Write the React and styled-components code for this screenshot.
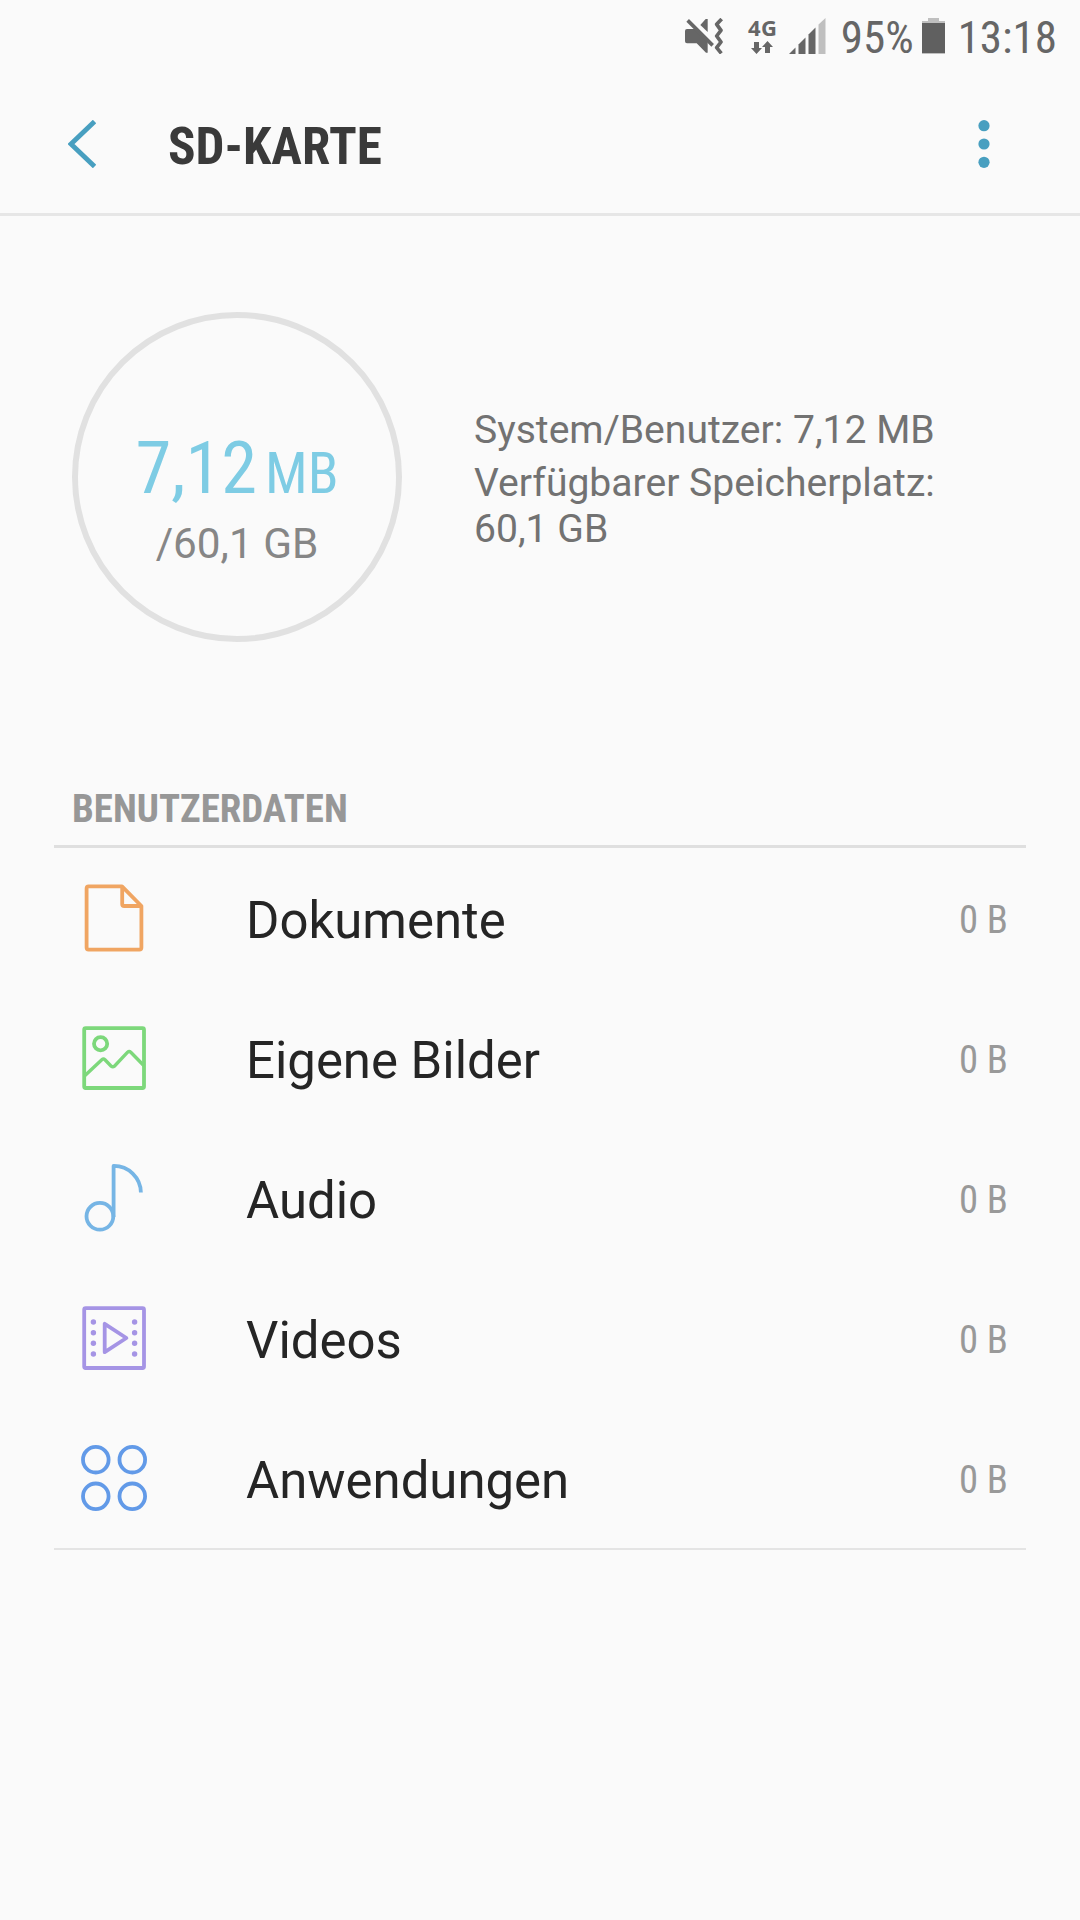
import React from "react";
import styled, { createGlobalStyle } from "styled-components";

const GlobalStyle = createGlobalStyle`
  * {
    box-sizing: border-box;
  }
  body {
    margin: 0;
    background-color: #fafafa;
    font-family: Roboto, "Liberation Sans", sans-serif;
  }
`;

const Condensed = styled.span`
  font-family: "Roboto Condensed", Roboto, sans-serif;
  font-stretch: 75%;
  white-space: nowrap;
`;

const Screen = styled.div`
  width: 1080px;
  height: 1920px;
  background-color: #fafafa;
  overflow: hidden;
`;

const StatusBar = styled.div`
  height: 72px;
  padding: 0 23px 0 0;
  display: flex;
  justify-content: flex-end;
  align-items: center;
  color: #666666;
`;

const StatusText = styled(Condensed)`
  font-size: 45px;
  line-height: 72px;
  padding-top: 3px;
  margin-left: ${props => props.$gap}px;
`;

const StatusIcon = styled.svg`
  flex: none;
  margin-left: ${props => props.$gap}px;
`;

const Network = styled.div`
  display: flex;
  flex-direction: column;
  align-items: center;
  width: 30px;
  height: 36px;
  margin: 0 -1px 0 24px;
  font-family: "Open Sans", sans-serif;
  font-size: 22px;
  font-weight: 700;
  line-height: 19px;
  letter-spacing: 0.5px;
`;

const Arrows = styled.svg`
  flex: none;
  margin: 4px 2px 0 0;
`;

const Header = styled.header`
  height: 144px;
  padding: 3px 90px 0 68px;
  display: flex;
  align-items: center;
  border-bottom: 3px solid #e6e6e6;
`;

const Title = styled(Condensed)`
  flex: 1;
  margin-left: 72px;
  padding-top: 6px;
  font-size: 51.2px;
  line-height: 60px;
  font-weight: 700;
  color: #3a3a3a;
`;

const Summary = styled.section`
  height: 569px;
  padding: 96px 72px 0;
  display: flex;
  gap: 72px;
`;

const Gauge = styled.div`
  width: 330px;
  height: 330px;
  padding-top: 112px;
  border: 6px solid #e1e1e1;
  border-radius: 50%;
  text-align: center;
`;

const Used = styled.div`
  height: 78px;
  line-height: 78px;
  font-size: 72.5px;
  color: #7ecce4;
`;

const Unit = styled(Condensed)`
  font-size: 56.5px;
  margin-left: 8px;
`;

const Total = styled.div`
  padding-top: 6px;
  font-size: 42.3px;
  line-height: 60px;
  color: #868686;
`;

const Details = styled.div`
  width: 480px;
  padding-top: 95px;
  font-size: 39.1px;
  line-height: 46px;
  color: #727272;
`;

const Detail = styled.p`
  margin: 0 0 7px;
`;

const SectionTitle = styled.h2`
  height: 63px;
  margin: 0 54px;
  padding: 1px 18px 0;
  border-bottom: 3px solid #dfdfdf;
  font-size: 38.9px;
  line-height: 46px;
  color: #979797;
`;

const List = styled.ul`
  list-style: none;
  margin: 0 54px;
  padding: 0;
  border-bottom: 2px solid #e4e4e4;
`;

const Row = styled.li`
  height: 140px;
  padding: 0 18px 0 24px;
  display: flex;
  align-items: center;
`;

const RowIcon = styled.svg`
  width: 72px;
  height: 72px;
  flex: none;
  fill: none;
  stroke: ${props => props.color};
  stroke-width: 3.8;
`;

const Label = styled.span`
  flex: 1;
  margin-left: 96px;
  padding-top: 4px;
  font-size: 50.9px;
  color: #252525;
`;

const Size = styled(Condensed)`
  padding-top: 2px;
  font-size: 38.7px;
  color: #999999;
`;

const DocumentIcon = () => (
  <RowIcon viewBox="0 0 72 72" color="#f0a562">
    <path
      d="M10.6 4.4H44L63.4 24V65.6a2 2 0 0 1-2 2H10.6a2 2 0 0 1-2-2V6.4a2 2 0 0 1 2-2Z"
      strokeLinejoin="round"
    />
    <path d="M44.2 5V22a2 2 0 0 0 2 2H63" />
  </RowIcon>
);

const PictureIcon = () => (
  <RowIcon viewBox="0 0 72 72" color="#7dd87b">
    <rect x="6.2" y="6.2" width="59.8" height="59.8" rx="1.5" />
    <circle cx="22.6" cy="21.8" r="6.6" />
    <path
      d="M7 53.5L23.8 37.8Q25.4 36.4 27 37.8L33.2 44.2Q34.8 45.5 36.4 44.2L49.6 30.2Q51.2 28.8 52.8 30.2L66 43.8"
      strokeWidth="3.4"
    />
  </RowIcon>
);

const AudioIcon = () => (
  <RowIcon viewBox="0 0 72 72" color="#76b5e5">
    <circle cx="21.9" cy="54.3" r="13.4" />
    <path d="M35.6 55V3.9A27 27 0 0 1 62.9 30.5" strokeLinejoin="round" />
  </RowIcon>
);

const VideoIcon = () => (
  <RowIcon viewBox="0 0 72 72" color="#a594e5">
    <rect x="6.2" y="6.2" width="59.8" height="59.8" rx="1.5" />
    <path d="M26.7 21.8V50.2L48.4 36Z" strokeLinejoin="round" />
    {[20, 30.7, 41.3, 52].map(y => (
      <g key={y} fill="#a594e5" stroke="none">
        <circle cx="15.4" cy={y} r="2.7" />
        <circle cx="56.6" cy={y} r="2.7" />
      </g>
    ))}
  </RowIcon>
);

const AppsIcon = () => (
  <RowIcon viewBox="0 0 72 72" color="#629ae8">
    <circle cx="17.8" cy="17.7" r="12.8" />
    <circle cx="54.3" cy="17.7" r="12.8" />
    <circle cx="17.8" cy="54.3" r="12.8" />
    <circle cx="54.3" cy="54.3" r="12.8" />
  </RowIcon>
);

const rows = [
  { label: "Dokumente", size: "0 B", Icon: DocumentIcon },
  { label: "Eigene Bilder", size: "0 B", Icon: PictureIcon },
  { label: "Audio", size: "0 B", Icon: AudioIcon },
  { label: "Videos", size: "0 B", Icon: VideoIcon },
  { label: "Anwendungen", size: "0 B", Icon: AppsIcon }
];

export default () => (
  <>
    <GlobalStyle />
    <Screen>
      <StatusBar>
        <StatusIcon $gap={0} width="40" height="36" viewBox="42 54 120 108" fill="#666">
          <path d="M51 87H76L113 124V158H108L80 130H51Q45 130 45 124V93Q45 87 51 87Z" />
          <path d="M91 75L107 57H113V96Z" />
          <path d="M53 61L128 136" stroke="#666" strokeWidth="11" />
          <path
            d="M155 57L140 73L153 91L140 108L153 126L140 143L154 160"
            fill="none"
            stroke="#666"
            strokeWidth="11"
            strokeLinejoin="round"
          />
        </StatusIcon>
        <Network>
          4G
          <Arrows width="22" height="14" viewBox="0 0 22 14" fill="#666">
            <path d="M3 1H8V7H11L5.5 13L0 7H3Z" />
            <path d="M14 12H19V6H22L16.5 0L11 6H14Z" />
          </Arrows>
        </Network>
        <StatusIcon $gap={12} width="37" height="36" viewBox="0 0 37 36" fill="#666">
          <path d="M0 36L6.5 29.5V36Z" />
          <path d="M9.5 26.5L16.5 19.5V36H9.5Z" />
          <path d="M19.5 16.5L26.5 9.5V36H19.5Z" />
          <path d="M29.5 6.5L36.5 0V36H29.5Z" fill="#bfbfbf" />
        </StatusIcon>
        <StatusText $gap={15}>95%</StatusText>
        <StatusIcon $gap={8} width="23" height="36" viewBox="0 0 23 36">
          <path d="M6 0H17V3H23V36H0V3H6Z" fill="#bfbfbf" />
          <path d="M0 5H23V35H0Z" fill="#606060" />
        </StatusIcon>
        <StatusText $gap={13}>13:18</StatusText>
      </StatusBar>
      <Header>
        <svg width="28" height="48" viewBox="0 0 28 48" fill="none">
          <path d="M26.5 1.5L3 24L26.5 46.5" stroke="#489fc0" strokeWidth="4.8" />
        </svg>
        <Title>SD-KARTE</Title>
        <svg width="12" height="50" viewBox="0 0 12 50" fill="#489fc0">
          <circle cx="6" cy="6.7" r="5.6" />
          <circle cx="6" cy="25" r="5.6" />
          <circle cx="6" cy="43.3" r="5.6" />
        </svg>
      </Header>
      <Summary>
        <Gauge>
          <Used>
            <Condensed>7,12</Condensed>
            <Unit>MB</Unit>
          </Used>
          <Total>/60,1 GB</Total>
        </Gauge>
        <Details>
          <Detail>System/Benutzer: 7,12 MB</Detail>
          <Detail>Verfügbarer Speicherplatz: 60,1 GB</Detail>
        </Details>
      </Summary>
      <SectionTitle>
        <Condensed>BENUTZERDATEN</Condensed>
      </SectionTitle>
      <List>
        {rows.map(({ label, size, Icon }) => (
          <Row key={label}>
            <Icon />
            <Label>{label}</Label>
            <Size>{size}</Size>
          </Row>
        ))}
      </List>
    </Screen>
  </>
);
